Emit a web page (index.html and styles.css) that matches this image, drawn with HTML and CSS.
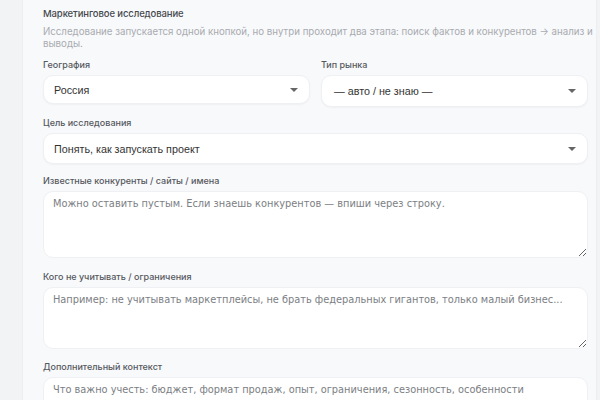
FILE: index.html
```html
<!DOCTYPE html>
<html lang="ru">
<head>
<meta charset="utf-8">
<link rel="stylesheet" href="styles.css">
</head>
<body>
<div class="page">
  <div class="card">
    <div class="title">Маркетинговое исследование</div>
    <div class="desc">Исследование запускается одной кнопкой, но внутри проходит два этапа: поиск фактов и конкурентов → анализ и выводы.</div>
    <div class="row2">
      <div class="field">
        <div class="label">География</div>
        <div class="select"><span>Россия</span><i class="arrow"></i></div>
      </div>
      <div class="field">
        <div class="label">Тип рынка</div>
        <div class="select tall"><span>— авто / не знаю —</span><i class="arrow"></i></div>
      </div>
    </div>
    <div class="field goal">
      <div class="label">Цель исследования</div>
      <div class="select"><span>Понять, как запускать проект</span><i class="arrow"></i></div>
    </div>
    <div class="field f1">
      <div class="label">Известные конкуренты / сайты / имена</div>
      <textarea class="area a1" placeholder="Можно оставить пустым. Если знаешь конкурентов — впиши через строку."></textarea>
    </div>
    <div class="field f2">
      <div class="label">Кого не учитывать / ограничения</div>
      <textarea class="area a2" placeholder="Например: не учитывать маркетплейсы, не брать федеральных гигантов, только малый бизнес..."></textarea>
    </div>
    <div class="field f3">
      <div class="label">Дополнительный контекст</div>
      <textarea class="area a3" placeholder="Что важно учесть: бюджет, формат продаж, опыт, ограничения, сезонность, особенности"></textarea>
    </div>
  </div>
</div>
</body>
</html>
```
FILE: styles.css
```css
html, body {
  margin: 0;
  padding: 0;
  height: 100%;
  overflow: hidden;
  background: #f2f3f5;
}
.page {
  padding-left: 22px;
  width: 575px;
}
.card {
  background: #f8f9fb;
  border-left: 1px solid #eceef1;
  border-right: 1px solid #eceef1;
  padding: 7px 8px 0 20px;
  height: 400px;
  box-sizing: border-box;
  font-family: Inter, "Noto Sans", sans-serif;
}
.title {
  font-size: 9.5px;
  font-weight: 500;
  letter-spacing: -0.1px;
  color: #46494e;
  line-height: 14px;
}
.desc {
  margin-top: 5px;
  margin-right: -6px;
  font-size: 9.7px;
  color: #a8abb0;
  line-height: 12px;
}
.row2 {
  display: grid;
  grid-template-columns: 1fr 1fr;
  gap: 11px;
  align-items: start;
}
.field {
  margin-top: 10px;
}
.row2 .field {
  margin-top: 8px;
}
.label {
  font-size: 9px;
  font-weight: 500;
  color: #55585d;
  line-height: 13px;
  margin-bottom: 4px;
}
.field.goal { margin-top: 9px; }
.field.f1 { margin-top: 10px; }
.field.f2 { margin-top: 12px; }
.field.f3 { margin-top: 11px; }
.select {
  height: 29px;
  background: #fff;
  border: 1px solid #eef0f3;
  border-radius: 10px;
  box-shadow: 0 1px 2px rgba(0,0,0,0.04);
  display: flex;
  align-items: center;
  justify-content: space-between;
  padding: 0 11px 0 10px;
  box-sizing: border-box;
  font-family: "Liberation Sans", Arial, sans-serif;
  font-size: 10.75px;
  color: #333;
}
.select.tall {
  height: 32px;
  padding-left: 12px;
}
.field.goal .select {
  height: 31px;
}
.arrow {
  width: 0;
  height: 0;
  border-left: 4.5px solid transparent;
  border-right: 4.5px solid transparent;
  border-top: 4.5px solid #666;
}
.area {
  display: block;
  width: 100%;
  box-sizing: border-box;
  background: #fff;
  border: 1px solid #eef0f3;
  border-radius: 10px;
  padding: 5px 9px;
  font-family: "DejaVu Sans", sans-serif;
  font-size: 9.8px;
  line-height: 13px;
  color: #333;
  outline: none;
  margin: 0;
}
.area::placeholder {
  color: #7b7e83;
}
.a1 { height: 67px; }
.a2 { height: 62px; }
.a3 { height: 40px; }
```
